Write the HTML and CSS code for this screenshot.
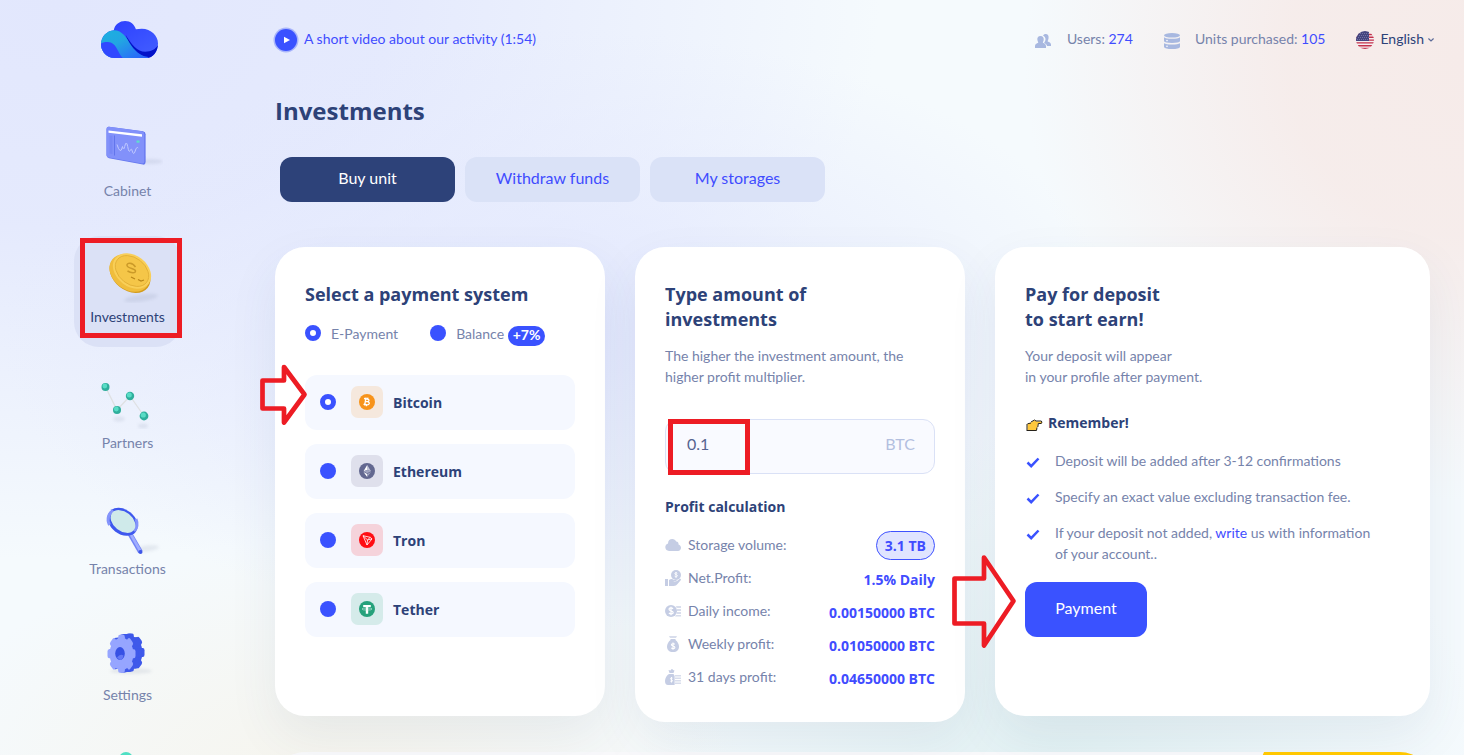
FILE: index.html
```html
<!DOCTYPE html>
<html lang="en">
<head>
<meta charset="utf-8">
<title>Investments</title>
<link rel="stylesheet" href="styles.css">
</head>
<body>
<div class="app">
  <aside class="sidebar">
    <svg class="logo" viewBox="0 0 58 38" width="57" height="37" preserveAspectRatio="none">
      <defs>
        <linearGradient id="lgA" x1="0" y1="0" x2="1" y2="1"><stop offset="0" stop-color="#2a3cff"/><stop offset="1" stop-color="#4460ff"/></linearGradient>
        <linearGradient id="lgB" x1="0" y1="0" x2="1" y2="1"><stop offset="0" stop-color="#1cb0e0"/><stop offset=".4" stop-color="#22a6e2"/><stop offset="1" stop-color="#2b5dff"/></linearGradient>
        <clipPath id="cloud"><path d="M14 38a14 14 0 0 1-14-14c0-8 6-14 13-14.500C14 3.500 19 0 24.500 0s9.500 3.500 11 8.500c2-.3 4-.6 6-.6C51 8 58 15 58 23s-5 15-12 15Z"/></clipPath>
      </defs>
      <g clip-path="url(#cloud)">
        <rect width="58" height="38" fill="url(#lgA)"/>
        <path d="M25 14c6 10 12 17.500 20 17.500 6 0 10-2 13-6.500v13H34Z" fill="#0312c8"/>
        <path d="M0 9.500h13c9 0 13 8 18 16 5 7 11 11 17 11.500v1H0Z" fill="url(#lgB)"/>
        <path d="M0 23c2-1 4-1.500 7-1.500 9 0 10 12 16 17.500H0Z" fill="#3148ff"/>
      </g>
    </svg>
    <nav class="menu">
      <a class="item">
        <svg class="pic" viewBox="0 0 70 60" width="70" height="60">
          <ellipse class="shade" cx="58" cy="44.500" rx="12" ry="2.500"/>
          <path d="M13.500 12q0-2.500 2.500-2.300L50 14.200q2.600.5 2.600 3V45q0 3-2.600 2.600L16 41.300q-2.500-.5-2.500-3Z" fill="#6577ee"/>
          <path d="M13.500 12q0-2.500 2.500-2.300L49 14.200q2.300.5 2.300 3v27q0 2.600-2.300 2.200L16 40.500q-2.500-.5-2.500-3Z" fill="#8291fa"/>
          <path d="m15.500 15.800 33.500 4v-2.600L15.500 13.500Z" fill="#fff"/>
          <path d="M16.500 18.500v18l3 .6v-18.400Z" fill="#7888f6"/>
          <path d="M21.500 18.500v20" stroke="#6275ec"/>
          <path d="M24 27.500q1.500 5 3 6t2.500-4q1 5 2.200 0 1.600-7 3 0 1.200 7 2.500 4t2 .5q1.500 5 3 0t3-3" fill="none" stroke="#c0c9ff"/>
          <rect x="43.500" y="23.500" width="3" height="2.200" fill="#5de0cb"/>
        </svg>
        <span>Cabinet</span>
      </a>
      <a class="item active">
        <svg class="pic" viewBox="0 0 70 60" width="70" height="60">
          <ellipse class="shade" cx="48" cy="55" rx="17" ry="3.500" transform="rotate(-8 48 55)"/>
          <ellipse cx="37" cy="31" rx="22.500" ry="16.500" transform="rotate(38 37 31)" fill="#d39c1d"/>
          <ellipse cx="36.500" cy="30" rx="22" ry="16.500" transform="rotate(38 36.500 30)" fill="#f0bd3c"/>
          <ellipse cx="39" cy="28" rx="21" ry="15.500" transform="rotate(38 39 28)" fill="#f9cf58"/>
          <ellipse cx="39" cy="28" rx="18.500" ry="13.200" transform="rotate(38 39 28)" fill="#f5c648" stroke="#e0ae35" stroke-width=".8"/>
          <path d="M42.500 24c-3-5-9-4.500-8.500-1.500s8.500 3 8.500 5.500-4.500 2-8 0" fill="none" stroke="#cb9a28" stroke-width="1.500"/>
          <path d="m38 34 4 2M45 36.500l3 1.500 3-1" fill="none" stroke="#b98618" stroke-width="1.300"/>
        </svg>
        <span>Investments</span>
      </a>
      <a class="item">
        <svg class="pic" viewBox="0 0 70 60" width="70" height="60">
          <ellipse class="shade" cx="26" cy="50" rx="6" ry="2.500"/><ellipse class="shade" cx="50" cy="57" rx="5" ry="2.500"/>
          <path d="m12.500 18 11.500 23 13-14 14 20" fill="none" stroke="#dfe1e3" stroke-width="1.300"/>
          <g fill="#2fae9c"><circle cx="12.500" cy="18" r="4"/><circle cx="24" cy="41" r="4"/><circle cx="37" cy="27" r="4.200"/><circle cx="51" cy="47" r="4.400"/></g>
          <g fill="#58dcc5"><circle cx="11.800" cy="17" r="2.400"/><circle cx="23.300" cy="40" r="2.400"/><circle cx="36.300" cy="26" r="2.500"/><circle cx="50.300" cy="46" r="2.600"/></g>
        </svg>
        <span>Partners</span>
      </a>
      <a class="item">
        <svg class="pic" viewBox="0 0 70 60" width="70" height="60">
          <ellipse class="shade" cx="54" cy="53.500" rx="12" ry="3" transform="rotate(-8 54 53.500)"/>
          <path d="m36.500 38 11 19" stroke="#7183f5" stroke-width="4.800"/>
          <path d="m37 38 10 17.500" stroke="#a0adff" stroke-width="2.600"/>
          <circle cx="47.500" cy="57" r="2" fill="#3f57e8"/>
          <ellipse cx="29.700" cy="26.800" rx="16.500" ry="12.200" transform="rotate(38 29.700 26.800)" fill="#3e58ee"/>
          <path d="M16.500 30c-3-6-1-12 4-14M43 24c2 5 1 9-2 12" fill="none" stroke="#8494fb" stroke-width="3"/>
          <ellipse cx="30" cy="26.500" rx="13.800" ry="9.600" transform="rotate(38 30 26.500)" fill="#cfeaea"/>
        </svg>
        <span>Transactions</span>
      </a>
      <a class="item">
        <svg class="pic" viewBox="0 0 70 60" width="70" height="60">
          <defs><g id="cog"><circle r="17"/><rect x="-4.800" y="-20" width="9.600" height="40" rx="2.500"/><rect x="-4.800" y="-20" width="9.600" height="40" rx="2.500" transform="rotate(45)"/><rect x="-4.800" y="-20" width="9.600" height="40" rx="2.500" transform="rotate(90)"/><rect x="-4.800" y="-20" width="9.600" height="40" rx="2.500" transform="rotate(135)"/></g></defs>
          <ellipse class="shade" cx="38" cy="50" rx="21" ry="3"/>
          <g fill="#3f59ea">
            <use href="#cog" transform="matrix(.7 0 0 .95 37.500 31.500)"/><use href="#cog" transform="matrix(.7 0 0 .95 36 31.700)"/><use href="#cog" transform="matrix(.7 0 0 .95 34.500 31.900)"/><use href="#cog" transform="matrix(.7 0 0 .95 33 32.100)"/><use href="#cog" transform="matrix(.7 0 0 .95 31.500 32.300)"/><use href="#cog" transform="matrix(.7 0 0 .95 30 32.500)"/>
          </g>
          <use href="#cog" transform="matrix(.7 0 0 .95 28.500 32.800)" fill="#96a5ff"/>
          <ellipse cx="27" cy="32.500" rx="4.800" ry="6.500" fill="#3650e4"/>
          <path d="M24 36.500q3-4 6.500-2-1 4.500-3.500 4.500Z" fill="#6478f5"/>
        </svg>
        <span>Settings</span>
      </a>
      <a class="item">
        <svg class="pic" viewBox="0 0 70 60" width="70" height="60"><circle cx="33" cy="12" r="7" fill="#4fe0c4"/><circle cx="33" cy="13" r="5" fill="#a5efe1"/></svg>
      </a>
    </nav>
  </aside>

  <main class="main">
    <header class="top">
      <a class="video"><span class="play"><svg viewBox="0 0 8 8" width="8" height="8"><path d="M1 .7 7 4 1 7.300Z" fill="#fff"/></svg></span><span class="v-label">A short video about our activity (1:54)</span></a>
      <div class="stats">
        <svg class="i-users" viewBox="0 0 16 14" width="16" height="14" fill="#a8b8e0"><path d="M8 1.500C9 0 10 0 10.500 0 13 0 14 2 13.500 4.500c-.3 1.500-.8 2-.8 3 1.500.8 3.300 1.200 3.300 3V12h-4c0-1.500-1.500-2.500-3-3 1-1.300 1.500-2.500 1.500-4S9.500 2.500 8 1.500Z"/><path d="M5.500 2C8 2 9 3.800 8.700 6c-.2 1.300-.8 1.800-.8 2.700 1.500.8 3.100 1.300 3.100 3.300v2H0v-2c0-2 1.600-2.500 3.200-3.300 0-1-.6-1.400-.8-2.700C2 3.800 3 2 5.500 2Z"/></svg>
        <span class="users">Users: <b>274</b></span>
        <svg class="i-db" viewBox="0 0 16 16" width="16" height="16"><g fill="#a8b8e0"><ellipse cx="8" cy="2.300" rx="8" ry="2.300"/><path d="M0 4.300Q2 5.800 8 5.800T16 4.300V8.300Q15 10 8 10T0 8.300Z"/><path d="M0 10.300Q2 11.600 8 11.600T16 10.300V14Q15 16 8 16T0 14Z"/></g><circle cx="3" cy="7.600" r=".8" fill="#fff"/><circle cx="3" cy="13.300" r=".8" fill="#fff"/></svg>
        <span class="units">Units purchased: <b>105</b></span>
        <svg class="flag" viewBox="0 0 18 18" width="18" height="18"><defs><clipPath id="fl"><circle cx="9" cy="9" r="9"/></clipPath></defs><g clip-path="url(#fl)"><rect width="18" height="18" fill="#f4eef2"/><path d="M0 3.500h18M0 6.300h18M0 9.100h18M0 11.900h18M0 14.700h18M0 17.500h18" stroke="#c4304a" stroke-width="1.400"/><rect width="13" height="10" fill="#44457f"/><path d="M2 2.500h11M1 4.500h11M2 6.500h11M1 8.500h11" stroke="#7c7dab" stroke-width=".8" stroke-dasharray="1 1"/></g></svg>
        <span class="lang">English</span>
        <svg class="chev" viewBox="0 0 6 4" width="6" height="4"><path d="m.4.5 2.600 2.500L5.600.5" fill="none" stroke="#5c6b98" stroke-width="1.200"/></svg>
      </div>
    </header>

    <h1 class="title">Investments</h1>
    <div class="tabs"><a class="tab on">Buy unit</a><a class="tab">Withdraw funds</a><a class="tab">My storages</a></div>

    <div class="cards">
      <section class="card">
        <h2>Select a payment system</h2>
        <div class="methods">
          <span class="radio sel"></span><span class="m-label first">E-Payment</span>
          <span class="radio"></span><span class="m-label">Balance</span><span class="bonus">+7%</span>
        </div>
        <div class="coins">
          <div class="coin"><span class="radio sel"></span><span class="chip btc"><svg viewBox="0 0 16 16" width="16" height="16"><circle cx="8" cy="8" r="8" fill="#f7931a"/><path d="m7 3.500-1.400 8.200M5 4.500l3 .5c3 .5 2.500 2.700 0 2.600L6.500 7.400 8.500 7.700c3 .7 2 3.500-1 3L4.500 10.300M9 3.600l-.3 1.500M7.500 10.500l-.2 1.800" fill="none" stroke="#fff" stroke-width="1.300"/></svg></span><span class="name">Bitcoin</span></div>
          <div class="coin"><span class="radio"></span><span class="chip eth"><svg viewBox="0 0 16 16" width="16" height="16"><circle cx="8" cy="8" r="8" fill="#636890"/><path d="M8.200 2v5L12 8.300Z" fill="#c4c7d8"/><path d="M8.200 2 4.500 8.300 8.200 7ZM8.200 11 4.500 9l3.700 5Z" fill="#fff"/><path d="M8.200 7 4.500 8.300l3.700 2 3.800-2ZM8.200 11 12 9l-3.800 5Z" fill="#a2a6c1"/></svg></span><span class="name">Ethereum</span></div>
          <div class="coin"><span class="radio"></span><span class="chip trx"><svg viewBox="0 0 16 16" width="16" height="16"><circle cx="8" cy="8" r="8" fill="#ff0d13"/><path d="m4 3.700 7.200 1.600 1.800 1.600L8 13Zm0 0 4.500 4.200L8 13M8.500 7.900l2.700-2.600M8.500 7.900 13 6.900" fill="none" stroke="#fff" stroke-width=".8"/></svg></span><span class="name">Tron</span></div>
          <div class="coin"><span class="radio"></span><span class="chip usdt"><svg viewBox="0 0 16 16" width="16" height="16"><circle cx="8" cy="8" r="8" fill="#26a17b"/><path d="M4.200 4h7.600v2H9.200v6.800H6.800V6H4.200Z" fill="#fff"/><ellipse cx="8" cy="8" rx="5" ry="1.100" fill="none" stroke="#d5eee6" stroke-width=".6"/></svg></span><span class="name">Tether</span></div>
        </div>
      </section>

      <section class="card mid">
        <h2>Type amount of<br>investments</h2>
        <p class="desc">The higher the investment amount, the<br>higher profit multiplier.</p>
        <div class="field"><span>0.1</span><span class="unit">BTC</span></div>
        <h3>Profit calculation</h3>
        <div class="rows">
          <div class="row"><svg viewBox="0 0 16 16" width="16" height="16"><path d="M4 14a3.900 3.900 0 0 1-1-7.600C3 3.500 5 2 7.200 2c2 0 3.300 1 4 2.600 1.800 0 2.500 1.400 2.300 2.800C15 8 16 9 16 10.800 16 12.700 14.700 14 13 14Z" fill="#c5cde4"/></svg><span>Storage volume:</span><b class="pill">3.1 TB</b></div>
          <div class="row"><svg viewBox="0 0 16 16" width="16" height="16"><g fill="#c5cde4"><circle cx="11" cy="5" r="5"/><path d="M0 9h3v7H0ZM4 10c2-1.500 3.500-1 5 0h2c1 0 1 1.600 0 1.600H8c2 .6 3 .3 4-.6l2.500-2c1.200-.8 2 .5 1 1.500l-3 3.500c-1 1.200-2 2-4 2H4Z"/></g><path d="M12.300 3.300c-1-1-2.500-.5-2.500.4 0 1.200 2.600.7 2.600 2 0 1-1.700 1.300-2.800.4M11 2v6" fill="none" stroke="#fff" stroke-width=".9"/></svg><span>Net.Profit:</span><b>1.5% Daily</b></div>
          <div class="row"><svg viewBox="0 0 16 16" width="16" height="16"><path d="M11 3h5v2h-4.500M12 6h4v2h-4M12 9h4v2h-4.500M11 12h5v1.500h-6" fill="#d8ddec"/><circle cx="6" cy="8" r="6" fill="#c5cde4"/><path d="M8 5.800C7 4.500 4 4.600 4 6.300c0 2 4.200 1 4.200 3.200 0 1.700-3.200 1.800-4.300.5M6 3.800v8.400" fill="none" stroke="#fff" stroke-width="1.200"/></svg><span>Daily income:</span><b>0.00150000 BTC</b></div>
          <div class="row"><svg viewBox="0 0 16 16" width="16" height="16"><path d="M4 0h8l-1 2H5Z" fill="#d8ddec"/><path d="M5.500 3h5v1C12.500 5.500 14 8 14 10.500c0 3.500-2 5.500-6 5.500s-6-2-6-5.500C2 8 3.500 5.500 5.500 4Z" fill="#c5cde4"/><path d="M9.700 8.300c-1-1-3.300-.8-3.300.5 0 1.500 3.500.8 3.500 2.600 0 1.400-2.500 1.500-3.600.4M8 6.500v7.200" fill="none" stroke="#fff" stroke-width="1.100"/></svg><span>Weekly profit:</span><b>0.01050000 BTC</b></div>
          <div class="row"><svg viewBox="0 0 16 16" width="16" height="16"><path d="M10 6h6v1.500h-6ZM10 8.500h6V10h-6ZM10 11h6v1.500h-6ZM10 13.500h6V15h-6Z" fill="#d8ddec"/><path d="m3.500 1 2 .5L7-.5l1 1.500 1.500.5-1 2.500h-4Z" fill="#c5cde4"/><path d="M4 5h4.500L9.600 7v9H3c-2 0-3-1.500-3-4 0-3 2-6 4-7Z" fill="#c5cde4"/><path d="M7.500 9.200c-1-.8-2-.4-2 .5 0 1.100 2 .7 2 2 0 1-1.300 1.200-2.200.4M6.500 8v5.500" fill="none" stroke="#fff" stroke-width=".9"/></svg><span>31 days profit:</span><b>0.04650000 BTC</b></div>
        </div>
      </section>

      <section class="card">
        <h2>Pay for deposit<br>to start earn!</h2>
        <p class="desc">Your deposit will appear<br>in your profile after payment.</p>
        <h3 class="remember"><svg viewBox="0 0 18 13" width="18" height="13"><path d="M2.500 5 6.500 3.200 9.500 1.200l2 1.300h5q1.200.8 0 2h-3.500L12.500 7.500 11.500 11H2.500Z" fill="#ffc83d"/><path d="M2 12V5M2.500 4.800 6 4M2 11.500h9.500l.5-3M6 3l3.500-2 1.500 1h5.300q1.200 1 0 2.500h-3L12.800 8" fill="none" stroke="#26221a" stroke-width="1"/></svg>Remember!</h3>
        <ul class="checks">
          <li><svg viewBox="0 0 14 11" width="14" height="11"><path d="m1.500 5.500 3.700 3.700 7.300-7.700" fill="none" stroke="#3a52ff" stroke-width="2.500"/></svg><span>Deposit will be added after 3-12 confirmations</span></li>
          <li><svg viewBox="0 0 14 11" width="14" height="11"><path d="m1.500 5.500 3.700 3.700 7.300-7.700" fill="none" stroke="#3a52ff" stroke-width="2.500"/></svg><span>Specify an exact value excluding transaction fee.</span></li>
          <li><svg viewBox="0 0 14 11" width="14" height="11"><path d="m1.500 5.500 3.700 3.700 7.300-7.700" fill="none" stroke="#3a52ff" stroke-width="2.500"/></svg><span>If your deposit not added, <a>write</a> us with information<br>of your account..</span></li>
        </ul>
        <a class="pay">Payment</a>
      </section>
    </div>
    <section class="next"><div class="ribbon"></div></section>
  </main>

  <svg class="marks" viewBox="0 0 1464 755" width="1464" height="755" fill="none" stroke="#ed1c24" stroke-width="5">
    <path d="M82.500 240.500h97v95h-97Z"/>
    <path d="M670.500 421.500h77v51h-77Z"/>
    <path stroke-width="4.700" stroke-linejoin="round" d="M262.500 380.500h21.500v-13.500L304.500 394.500 284 422.500V408.500h-21.500Z"/>
    <path stroke-width="4.700" stroke-linejoin="round" d="M954.500 578.500H984v-21L1013.500 601 984 645.500V623.500H954.500Z"/>
  </svg>
</div>
</body>
</html>
```

FILE: styles.css
```css
* { box-sizing: border-box; }
body { margin: 0; font: 14px/21px Lato, "Liberation Sans", sans-serif; color: #7683ab; }
h1, h2, h3, p, ul { margin: 0; padding: 0; }
.app {
  position: relative; display: flex; width: 1464px; height: 755px; overflow: hidden;
  background:
    radial-gradient(ellipse 440px 440px at 1464px 60px, #f6ebe9 0%, #f6ebe9e6 40%, #f6ebe900 100%),
    radial-gradient(ellipse 420px 260px at 330px 800px, #f6f4ec 0%, #f6f4ec00 100%),
    radial-gradient(ellipse 420px 330px at 1060px 760px, #e2f1f3 0%, #e2f1f300 100%),
    radial-gradient(ellipse 560px 300px at 560px 330px, #e3e8fe 0%, #e3e8fe00 100%),
    radial-gradient(ellipse 820px 560px at 60px 0, #e2e7fd 0%, #e3e8fde6 40%, #e3e8fd00 100%),
    #f5fafd;
}
.sidebar { width: 275px; flex: none; padding: 21px 0 0 74px; }
.logo { display: block; margin: 0 0 52px 27px; }
.menu { display: flex; flex-direction: column; gap: 15px; width: 107px; }
.item { display: flex; flex-direction: column; align-items: center; height: 111px; padding-top: 7px; border-radius: 25px; }
.item .pic { flex: none; margin-bottom: 3px; }
.active { background: #dbe1f6; color: #2d4278; }
.shade { fill: #6c7896; opacity: .13; filter: blur(1.500px); }

.main { width: 1155px; flex: none; }
.top { display: flex; justify-content: space-between; height: 97px; padding-top: 27px; align-items: flex-start; margin-right: -4px; }
.video { display: flex; align-items: center; height: 25px; color: #3f4cff; }
.v-label { margin-top: -2px; }
.play { display: flex; align-items: center; justify-content: center; width: 22px; height: 22px; margin-right: 7px; border-radius: 50%; background: #3a52ff; box-shadow: 0 0 0 1.500px #a9b5fb; }
.video .play svg { margin-left: 1px; }
.stats { display: flex; align-items: center; height: 25px; }
.stats span { margin-top: -2px; }
.stats b { font-weight: 400; color: #3f4cff; }
.i-users { margin: 3px 16px 0 0; }
.users { margin-right: 31px; }
.i-db { margin: 3px 15px 0 0; }
.units { margin-right: 31px; }
.flag { margin-right: 6px; }
.lang { color: #2d4278; }
.chev { margin: 1px 0 0 4px; }
.title { font: 700 24px/28px "Open Sans", sans-serif; color: #2d4278; }
.tabs { display: flex; gap: 10px; margin: 32px 0 45px 5px; }
.tab { width: 175px; height: 45px; border-radius: 12px; background: #dae2f7; color: #3f4cff; font-size: 16px; line-height: 41px; text-align: center; }
.tab.on { background: #2d4279; color: #fff; }

.cards { display: grid; grid-template-columns: 330px 330px 435px; gap: 30px; align-items: start; height: 505px; }
.card { height: 469px; padding: 35px 30px 0; border-radius: 30px; background: #fff; box-shadow: 0 20px 50px rgba(50, 75, 120, .08); }
.card.mid { height: 475px; }
h2, h3, .coin, .row b { font-family: "Open Sans", sans-serif; font-weight: 700; color: #2d4278; }
h2 { font-size: 18px; line-height: 25px; }
h3 { font-size: 14px; line-height: 20px; }
.radio { flex: none; width: 16px; height: 16px; border-radius: 50%; background: #3a52ff; }
.radio.sel { border: 5px solid #3a52ff; background: #fff; }
.methods { display: flex; align-items: center; height: 22px; margin-top: 15px; }
.m-label { margin: 0 4px 0 10px; }
.m-label.first { margin-right: 32px; }
.bonus { width: 37px; height: 20px; margin-top: 5px; border-radius: 10px; background: #3a52ff; color: #fff; font-weight: 700; line-height: 17px; text-align: center; }
.coins { display: grid; gap: 14px; margin-top: 31px; }
.coin { display: flex; align-items: center; height: 55px; padding: 0 0 2px 15px; border-radius: 12px; background: #f5f8ff; font-size: 14px; }
.name { padding-top: 2px; }
.chip { display: flex; align-items: center; justify-content: center; width: 32px; height: 32px; margin: 0 10px 0 15px; border-radius: 7px; }
.btc { background: #f5e8dd; }
.eth { background: #dfe0ec; }
.trx { background: #f5d3db; }
.usdt { background: #d5ebea; }

.desc { margin-top: 13px; line-height: 21px; }
.field { display: flex; justify-content: space-between; height: 55px; margin: 32px 0 23px; padding: 0 19px 0 21px; border: 1px solid #dae1f6; border-radius: 12px; background: #f9faff; font-size: 16px; line-height: 47px; color: #56648f; }
.unit { color: #b3bfdf; }
.rows { margin-top: 12px; }
.row { display: flex; align-items: center; height: 33px; padding-bottom: 2px; }
.row svg { margin-right: 7px; }
.row b { margin: 3px 0 0 auto; font-size: 14px; color: #3f4cff; }
.row .pill { height: 29px; margin-top: 2px; padding: 0 8px; border: 1px solid #3f52ff; border-radius: 15px; background: #e0e4ff; line-height: 28px; }
.remember { display: flex; align-items: center; margin: 26px 0 17px; }
.remember svg { margin: 5px 5px 0 0; }
.checks { display: grid; gap: 15px; list-style: none; }
.checks li { display: flex; align-items: flex-start; }
.checks svg { flex: none; margin: 7px 15px 0 1px; }
.checks a { color: #3f4cff; }
.pay { display: block; width: 122px; height: 55px; margin-top: 18px; border-radius: 12px; background: #3a52ff; color: #fff; font-size: 16px; line-height: 52px; text-align: center; }
.next { display: flex; justify-content: flex-end; height: 60px; border-radius: 30px; overflow: hidden; background: #f9f9fb; }
.ribbon { width: 170px; background: #ffc700; clip-path: polygon(4px 0, 100% 0, 100% 100%, 0 100%, 0 10px); }
.marks { position: absolute; inset: 0; pointer-events: none; }
```
